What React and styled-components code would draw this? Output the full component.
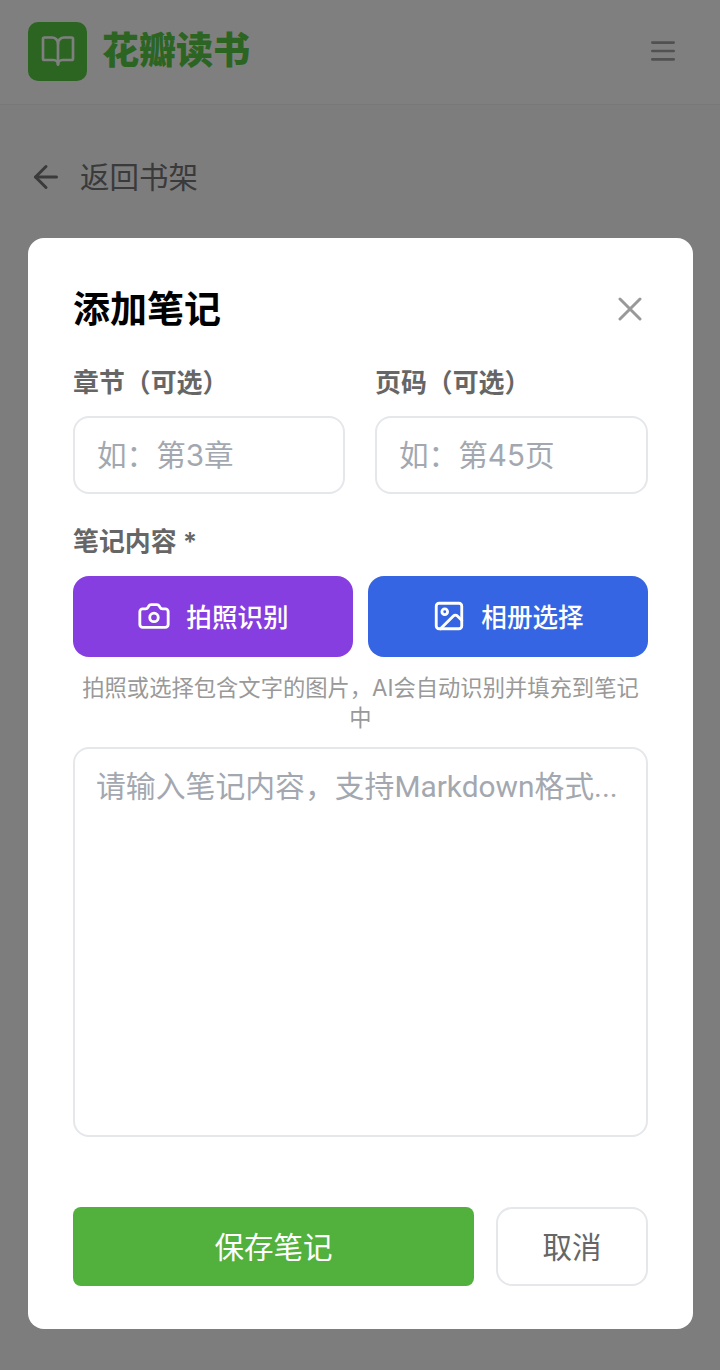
import React from "react";
import styled, { createGlobalStyle } from "styled-components";
import { ArrowLeft, BookOpen, Camera, Image } from "lucide-react";

const GlobalStyle = createGlobalStyle`
  * {
    box-sizing: border-box;
  }

  html,
  body {
    margin: 0;
    padding: 0;
  }

  body {
    font-family: Inter, "Noto Sans CJK SC", sans-serif;
    background: #fafafa;
  }
`;

const Page = styled.div`
  position: relative;
  width: 720px;
  height: 1370px;
  overflow: hidden;
`;

const Header = styled.header`
  height: 105px;
  padding: 0 45px 2px 28px;
  display: flex;
  align-items: center;
  justify-content: space-between;
  background: #fff;
  border-bottom: 1px solid #f0f0f0;
`;

const Brand = styled.div`
  display: flex;
  align-items: center;
  gap: 15px;
`;

const LogoMark = styled.div`
  width: 59px;
  height: 59px;
  border-radius: 10px;
  background: #58c842;
  color: #fff;
  display: flex;
  align-items: center;
  justify-content: center;
`;

const BrandName = styled.div`
  font-size: 37px;
  font-weight: 900;
  line-height: 44px;
  color: #58c842;
`;

const MenuIcon = styled.svg`
  width: 24px;
  height: 20px;
  display: block;
  color: #a3a3a3;
`;

const BackRow = styled.div`
  display: flex;
  align-items: center;
  gap: 16px;
  padding: 52px 0 0 28px;
  font-size: 29.5px;
  line-height: 40px;
  color: #757575;
`;

const Overlay = styled.div`
  position: absolute;
  inset: 0;
  background: rgba(0, 0, 0, 0.5);
`;

const Modal = styled.div`
  position: absolute;
  left: 28px;
  top: 238px;
  width: 665px;
  height: 1091px;
  padding: 45px 45px 43px;
  border-radius: 16px;
  background: #fff;
  display: flex;
  flex-direction: column;
`;

const ModalHead = styled.div`
  height: 52px;
  margin-top: 1px;
  display: flex;
  align-items: center;
  justify-content: space-between;
`;

const ModalTitle = styled.h2`
  margin: 0;
  font-size: 37px;
  font-weight: 700;
  line-height: 52px;
  color: #000;
`;

const CloseIcon = styled.svg`
  width: 24px;
  height: 24px;
  display: block;
  margin-right: 6px;
  margin-top: -3px;
  color: #999;
`;

const FieldGrid = styled.div`
  display: grid;
  grid-template-columns: 272px 273px;
  gap: 30px;
  margin-top: 30px;
`;

const Label = styled.label`
  display: block;
  font-size: 25.9px;
  font-weight: 600;
  line-height: 34px;
  color: #666;
`;

const TextInput = styled.input`
  display: block;
  width: 100%;
  height: 78px;
  margin-top: 16px;
  padding: 0 22px;
  border: 2px solid #e5e7eb;
  border-radius: 16px;
  outline: none;
  font: inherit;
  font-size: 29.6px;
  color: #111827;

  &::placeholder {
    color: #a3a8b0;
    opacity: 1;
  }
`;

const ContentLabel = styled(Label)`
  margin-top: 31px;
`;

const ActionRow = styled.div`
  display: grid;
  grid-template-columns: 1fr 1fr;
  gap: 15px;
  margin-top: 17px;
`;

const ActionButton = styled.button`
  height: 81px;
  padding: 0 0 2px;
  border: 0;
  border-radius: 16px;
  background: ${(props) => props.$color};
  color: #fff;
  font: inherit;
  font-size: 25.6px;
  font-weight: 500;
  display: flex;
  align-items: center;
  justify-content: center;
  gap: 15px;
`;

const Hint = styled.p`
  margin: 16px 0 0;
  padding: 0 4px;
  font-size: 22.3px;
  line-height: 30px;
  text-align: center;
  color: #999;
`;

const NoteArea = styled.textarea`
  display: block;
  width: 100%;
  height: 390px;
  flex-shrink: 0;
  margin-top: 14px;
  padding: 18px 21px;
  border: 2px solid #e5e7eb;
  border-radius: 16px;
  outline: none;
  resize: none;
  font-family: Roboto, "Noto Sans CJK SC", sans-serif;
  font-size: 29.85px;
  line-height: 40px;
  color: #111827;

  &::placeholder {
    color: #a3a8b0;
    opacity: 1;
  }
`;

const Footer = styled.div`
  display: flex;
  gap: 22px;
  margin-top: 70px;
`;

const SaveButton = styled.button`
  width: 401px;
  height: 79px;
  padding: 0 0 4px;
  border: 0;
  border-radius: 8px;
  background: #52b13d;
  color: #fff;
  font: inherit;
  font-size: 29.5px;
`;

const CancelButton = styled.button`
  flex: 1;
  height: 79px;
  padding: 0 0 4px;
  border: 2px solid #e5e7eb;
  border-radius: 16px;
  background: #fff;
  color: #666;
  font: inherit;
  font-size: 29.5px;
`;

export default function App() {
  return (
    <Page>
      <GlobalStyle />
      <Header>
        <Brand>
          <LogoMark>
            <BookOpen size={36} strokeWidth={1.8} />
          </LogoMark>
          <BrandName>花瓣读书</BrandName>
        </Brand>
        <MenuIcon viewBox="0 0 24 20" fill="none" stroke="currentColor" strokeWidth="2.6" strokeLinecap="round">
          <path d="M1.3 1.6h21.4M1.3 10h21.4M1.3 18.4h21.4" />
        </MenuIcon>
      </Header>
      <BackRow>
        <ArrowLeft size={36} strokeWidth={2} />
        返回书架
      </BackRow>
      <Overlay />
      <Modal>
        <ModalHead>
          <ModalTitle>添加笔记</ModalTitle>
          <CloseIcon viewBox="0 0 24 24" fill="none" stroke="currentColor" strokeWidth="3" strokeLinecap="round">
            <path d="M2 2l20 20M22 2L2 22" />
          </CloseIcon>
        </ModalHead>
        <FieldGrid>
          <div>
            <Label>章节（可选）</Label>
            <TextInput placeholder="如：第3章" />
          </div>
          <div>
            <Label>页码（可选）</Label>
            <TextInput placeholder="如：第45页" />
          </div>
        </FieldGrid>
        <ContentLabel>笔记内容 *</ContentLabel>
        <ActionRow>
          <ActionButton $color="#873ee0">
            <Camera size={34} strokeWidth={2} />
            拍照识别
          </ActionButton>
          <ActionButton $color="#3565e3">
            <Image size={34} strokeWidth={2} />
            相册选择
          </ActionButton>
        </ActionRow>
        <Hint>拍照或选择包含文字的图片，AI会自动识别并填充到笔记中</Hint>
        <NoteArea placeholder="请输入笔记内容，支持Markdown格式..." />
        <Footer>
          <SaveButton>保存笔记</SaveButton>
          <CancelButton>取消</CancelButton>
        </Footer>
      </Modal>
    </Page>
  );
}
